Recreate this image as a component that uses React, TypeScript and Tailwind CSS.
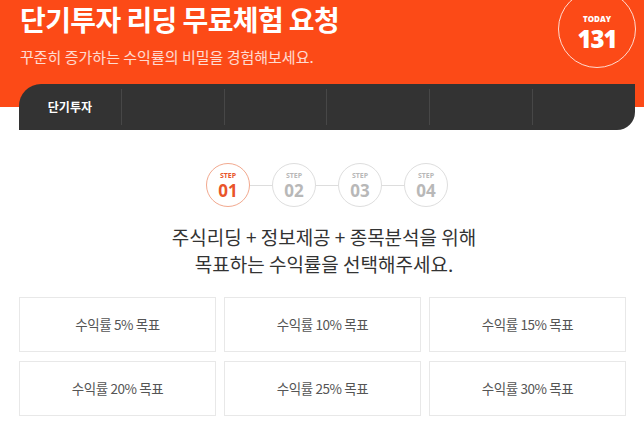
import React from "react";

const tabs = ["단기투자", "", "", "", "", ""];
const steps = ["01", "02", "03", "04"];
const goals = [5, 10, 15, 20, 25, 30];

export default function App() {
  return (
    <div className="w-[644px] h-[426px] overflow-hidden bg-white font-['Noto_Sans_CJK_KR',sans-serif]">
      {/* header: orange up to 107px, the tab bar hangs over the edge */}
      <div className="relative bg-[linear-gradient(#fc4a17_107px,#fff_107px)]">
        <div className="pl-[20px] pt-[1px]">
          <h1 className="text-[28px] leading-[36px] font-bold text-white tracking-[-0.6px]">
            단기투자 리딩 무료체험 요청
          </h1>
          <p className="mt-[9px] text-[15px] leading-[21px] text-white/80">
            꾸준히 증가하는 수익률의 비밀을 경험해보세요.
          </p>
        </div>

        <div className="absolute right-[8px] top-[-10px] w-[78px] h-[78px] rounded-full border border-white/80 flex flex-col items-center justify-center gap-[4px] pt-[6px]">
          <span className="text-[8px] leading-[9px] font-extrabold text-white font-['Open_Sans',sans-serif]">TODAY</span>
          <span className="text-[24px] leading-[24px] font-extrabold text-white font-['Open_Sans',sans-serif] tracking-[-1px]">131</span>
        </div>

        <nav className="mt-[17px] ml-[19px] w-[616px] h-[46px] bg-[#333333] rounded-tl-[22px] rounded-br-[18px] flex items-center">
          {tabs.map((t, i) => (
            <div
              key={i}
              className={`flex-1 h-[36px] flex items-center justify-center text-[12px] font-bold text-white ${i > 0 ? "border-l border-white/10" : ""}`}
            >
              {t}
            </div>
          ))}
        </nav>
      </div>

      {/* steps */}
      <div className="mt-[33px] flex items-center justify-center pl-[10px]">
        {steps.map((s, i) => (
          <React.Fragment key={s}>
            {i > 0 && <div className="w-[22px] h-px bg-[#dddddd]" />}
            <div
              className={`w-[44px] h-[44px] rounded-full border flex flex-col items-center justify-center gap-[2px] font-['Open_Sans',sans-serif] ${
                i === 0 ? "border-[#f2a98f] text-[#e9552a]" : "border-[#dedede] text-[#b8b8b8]"
              }`}
            >
              <span className="text-[7px] leading-[8px] font-bold">STEP</span>
              <span className="text-[17px] leading-[17px] font-bold">{s}</span>
            </div>
          </React.Fragment>
        ))}
      </div>

      <p className="mt-[16px] text-center text-[19px] leading-[27px] text-[#333333] pl-[4px]">
        주식리딩 + 정보제공 + 종목분석을 위해
        <br />
        목표하는 수익률을 선택해주세요.
      </p>

      {/* goals */}
      <div className="mt-[20px] ml-[19px] w-[607px] grid grid-cols-3 gap-x-[8px] gap-y-[9px]">
        {goals.map((g) => (
          <div
            key={g}
            className="h-[55px] border border-[#e8e8e8] flex items-center justify-center text-[13.5px] text-[#555555] tracking-[-0.4px]"
          >
            수익률 {g}% 목표
          </div>
        ))}
      </div>
    </div>
  );
}
